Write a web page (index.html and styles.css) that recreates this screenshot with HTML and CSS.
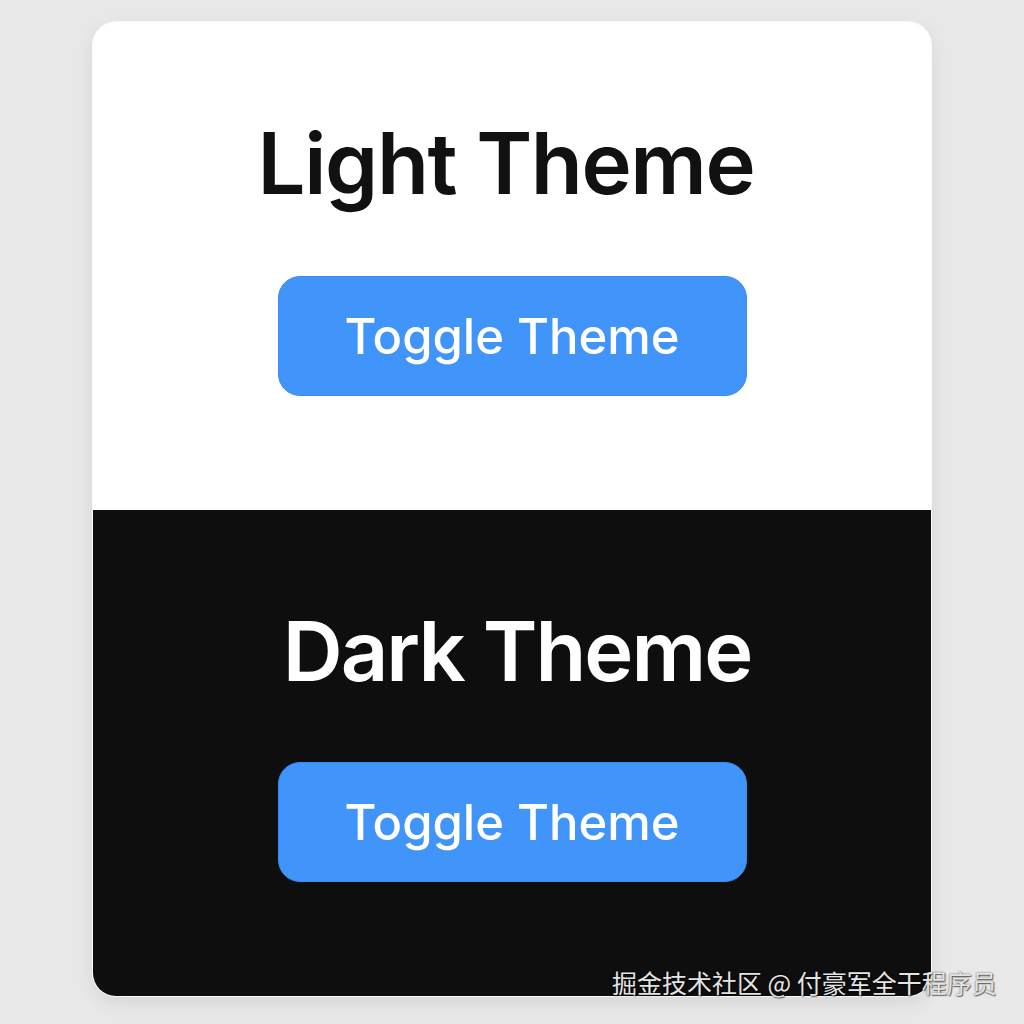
FILE: index.html
```html
<!DOCTYPE html>
<html lang="en">
<head>
<meta charset="utf-8">
<title>Theme Toggle</title>
<link rel="stylesheet" href="styles.css">
</head>
<body>
<div class="page">
  <div class="card">
    <section class="panel panel-light">
      <h1 class="title">Light Theme</h1>
      <button class="toggle">Toggle Theme</button>
    </section>
    <section class="panel panel-dark">
      <h1 class="title">Dark Theme</h1>
      <button class="toggle">Toggle Theme</button>
    </section>
  </div>
  <div class="watermark">掘金技术社区 @ 付豪军全干程序员</div>
</div>
</body>
</html>
```
FILE: styles.css
```css
html, body {
  margin: 0;
  padding: 0;
}
body {
  background: #e8e8e8;
  font-family: Inter, "Noto Sans", sans-serif;
  width: 1024px;
  height: 1024px;
  overflow: hidden;
}
.page {
  position: relative;
  width: 1024px;
  height: 1024px;
  padding: 21px 0 0 92px;
  box-sizing: border-box;
}
.card {
  width: 840px;
  border-radius: 24px;
  overflow: hidden;
  border: 1px solid #fafafa;
  box-sizing: border-box;
  box-shadow: 0 6px 18px rgba(0, 0, 0, 0.08);
}
.panel {
  display: flex;
  flex-direction: column;
  align-items: center;
  box-sizing: border-box;
}
.panel-light {
  background: #ffffff;
  height: 488px;
  color: #111111;
  padding-top: 99px;
}
.panel-dark {
  background: #0e0e0e;
  height: 486px;
  color: #ffffff;
  padding-top: 100px;
}
.title {
  margin: 0;
  line-height: 1;
  font-weight: 600;
}
.panel-light .title {
  font-size: 85px;
  letter-spacing: -1.4px;
  margin-bottom: 70px;
  transform: translateX(-6px);
}
.panel-dark .title {
  font-size: 83px;
  letter-spacing: -2px;
  margin-bottom: 69px;
  transform: translateX(5px);
}
.toggle {
  width: 469px;
  height: 120px;
  border: 1px solid #3a8cf0;
  border-radius: 22px;
  background: #4094fa;
  color: #ffffff;
  font-family: Inter, "Noto Sans", sans-serif;
  font-size: 49px;
  font-weight: 500;
  padding: 0;
  cursor: pointer;
}
.watermark {
  position: absolute;
  left: 612px;
  top: 965px;
  font-family: "Noto Sans CJK SC", "Noto Sans", sans-serif;
  font-size: 25px;
  line-height: 34px;
  color: #e4e4e4;
  text-shadow: 0 0 2px rgba(0, 0, 0, 0.6), 1px 1px 1px rgba(0, 0, 0, 0.5);
  white-space: nowrap;
}
```
